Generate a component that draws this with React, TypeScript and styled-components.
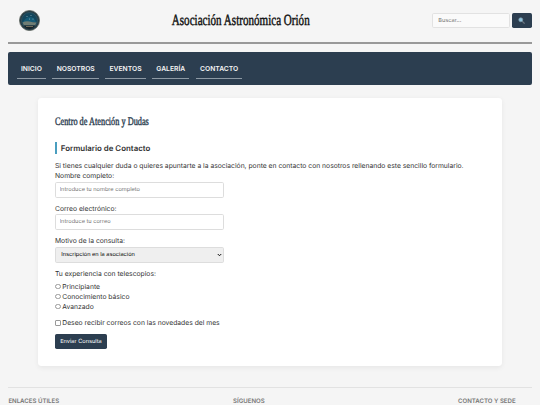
import React, { useState } from 'react';
import styled, { createGlobalStyle } from 'styled-components';

const GlobalStyle = createGlobalStyle`
  * {
    box-sizing: border-box;
  }

  html {
    overflow: hidden;
  }

  body {
    margin: 0;
    padding: 8.4px 8.4px 0;
    height: 405px;
    overflow: hidden;
    background-color: #f5f5f5;
    color: #333;
    font-family: Inter, 'Liberation Sans', sans-serif;
    font-size: 6.75px;
    line-height: 10.13px;
    text-rendering: geometricPrecision;
  }

  input,
  select,
  button {
    font-family: inherit;
    font-size: 5.63px;
    text-rendering: inherit;
  }
`;

const Header = styled.header`
  display: flex;
  justify-content: space-between;
  align-items: center;
  height: 35.6px;
  padding: 0 0 8.4px 11px;
  border-bottom: 2px solid #999;
`;

const Logo = styled.svg`
  display: block;
  width: 21px;
  height: 21px;
`;

const TitleBox = styled.div`
  display: flex;
  flex-shrink: 0;
  justify-content: center;
  width: 138px;
  margin-left: 10px;
`;

const Title = styled.h1`
  margin: 0;
  color: #111;
  font-family: 'Liberation Serif', serif;
  font-size: 15.4px;
  font-weight: 400;
  line-height: 20px;
  white-space: nowrap;
  -webkit-text-stroke: 0.45px #111;
  transform: scaleX(0.72);
`;

const SearchForm = styled.form`
  display: flex;
  gap: 1.7px;
`;

const SearchInput = styled.input`
  width: 78px;
  height: 15px;
  padding: 0 5.4px;
  border: 1px solid #e2e2e2;
  border-radius: 1.7px;
  background: #fafafa;

  &::placeholder {
    color: #757575;
  }
`;

const SearchButton = styled.button`
  display: flex;
  align-items: center;
  justify-content: center;
  width: 20px;
  height: 15px;
  padding: 0;
  border: 0;
  border-radius: 1.7px;
  background: #2c3e50;
`;

const Nav = styled.nav`
  display: flex;
  align-items: center;
  gap: 6.4px;
  height: 33.4px;
  margin-top: 7.8px;
  padding: 1.6px 8.4px 0;
  border-radius: 2px;
  background: #2c3e50;
`;

const NavLink = styled.a`
  padding: 4px 4.2px;
  border-bottom: 1px solid #8d99a4;
  color: #f5f5f5;
  font-weight: 600;
  text-decoration: none;
  text-transform: uppercase;
`;

const Card = styled.main`
  width: 464px;
  height: 268px;
  margin: 12.8px auto 0;
  padding: 17px;
  border-radius: 3.4px;
  background: #fff;
  box-shadow: 0 1.7px 5px rgba(0, 0, 0, 0.06);
`;

const SectionTitle = styled.h2`
  width: max-content;
  margin: 0 0 12px;
  color: #2c3e50;
  font-family: 'Liberation Serif', serif;
  font-size: 11.5px;
  font-weight: 400;
  line-height: 15.5px;
  -webkit-text-stroke: 0.4px #2c3e50;
  transform: scaleX(0.72);
  transform-origin: left;
`;

const FormTitle = styled.h3`
  margin: 0 0 6.8px;
  padding-left: 3.8px;
  border-left: 2px solid #4a9ebf;
  font-size: 7.9px;
  font-weight: 600;
  line-height: 12px;
`;

const Intro = styled.p`
  margin: 0;
`;

const Field = styled.div`
  width: 169px;
  margin-bottom: 6.2px;
`;

const Label = styled.label`
  display: block;
`;

const TextInput = styled.input`
  display: block;
  width: 100%;
  height: 16.2px;
  padding: 0 3.6px;
  border: 1px solid #ddd;
  border-radius: 1.7px;

  &::placeholder {
    color: #757575;
  }
`;

const Select = styled.select`
  display: block;
  width: 100%;
  height: 16.4px;
  padding: 0 0 0 5.2px;
  border: 1px solid #ddd;
  border-radius: 1.7px;
  background: #efefef;
  color: #000;
  appearance: none;
`;

const SelectBox = styled.div`
  position: relative;
`;

const Chevron = styled.svg`
  position: absolute;
  top: 6.5px;
  right: 1.6px;
  width: 5px;
  height: 4px;
`;

const Option = styled.label`
  display: flex;
  align-items: center;
  gap: 1.7px;
`;

const Mark = styled.input`
  appearance: none;
  width: 5.6px;
  height: 5.6px;
  margin: 0 0 1px;
  border: 1px solid #999;
  border-radius: ${({ type }) => (type === 'radio' ? '50%' : '1px')};
  background: #fff;
`;

const Options = styled.div`
  margin: 2.6px 0 6.2px;
`;

const Submit = styled.button`
  display: block;
  width: 52px;
  height: 15px;
  margin-top: 5.8px;
  padding: 0;
  border: 0;
  border-radius: 1.7px;
  background: #2c3e50;
  color: #fff;
`;

const Footer = styled.footer`
  display: flex;
  justify-content: space-between;
  margin-top: 21.2px;
  padding: 8.4px 16px 0 0;
  border-top: 1px solid #e2e2e2;
`;

const FooterTitle = styled.h4`
  margin: 0;
  color: #777;
  font-size: 6.08px;
  font-weight: 600;
  text-transform: uppercase;

  &:nth-child(2) {
    margin-right: 19.6px;
  }
`;

const links = ['Inicio', 'Nosotros', 'Eventos', 'Galería', 'Contacto'];
const levels = ['Principiante', 'Conocimiento básico', 'Avanzado'];
const footerTitles = ['Enlaces útiles', 'Síguenos', 'Contacto y sede'];

const App: React.FC = () => {
  const [reason, setReason] = useState('inscripcion');

  return (
    <>
      <GlobalStyle />
      <Header>
        <Logo viewBox="0 0 42 42">
          <circle cx="21" cy="21" r="20" fill="#233b45" stroke="#5c625b" strokeWidth="1.6" />
          <circle cx="21" cy="21" r="16" fill="#13465c" stroke="#44616a" />
          <path d="M8 24q5-9 13-10t13 10z" fill="#155b76" />
          <path d="M7 25q7-4 14-2t14 2l-3 6H10z" fill="#6f7d74" />
          <path d="M9 31h24q-5 7-12 7T9 31z" fill="#17242a" />
          <path d="M14 33h14" stroke="#6b6a5c" strokeWidth="2" />
          <g fill="#8fb5c0">
            <circle cx="16" cy="13" r="1" />
            <circle cx="24" cy="11" r="1" />
            <circle cx="21" cy="18" r="1" />
            <circle cx="28" cy="18" r="1" />
          </g>
        </Logo>
        <TitleBox>
          <Title>Asociación Astronómica Orión</Title>
        </TitleBox>
        <SearchForm>
          <SearchInput placeholder="Buscar..." />
          <SearchButton type="button" aria-label="Buscar">
            <svg width="7" height="7" viewBox="0 0 14 14">
              <path d="M8 8l4.5 4.5" stroke="#66727c" strokeWidth="2.4" strokeLinecap="round" />
              <circle cx="5.5" cy="5.5" r="4" fill="#8fc3dc" stroke="#7d98a8" strokeWidth="1.4" />
            </svg>
          </SearchButton>
        </SearchForm>
      </Header>

      <Nav>
        {links.map(link => (
          <NavLink key={link} href="#">{link}</NavLink>
        ))}
      </Nav>

      <Card>
        <SectionTitle>Centro de Atención y Dudas</SectionTitle>
        <FormTitle>Formulario de Contacto</FormTitle>
        <Intro>
          Si tienes cualquier duda o quieres apuntarte a la asociación, ponte en contacto con nosotros rellenando este sencillo formulario.
        </Intro>
        <form>
          <Field>
            <Label htmlFor="nombre">Nombre completo:</Label>
            <TextInput id="nombre" placeholder="Introduce tu nombre completo" />
          </Field>
          <Field>
            <Label htmlFor="correo">Correo electrónico:</Label>
            <TextInput id="correo" placeholder="Introduce tu correo" />
          </Field>
          <Field>
            <Label htmlFor="motivo">Motivo de la consulta:</Label>
            <SelectBox>
              <Select id="motivo" value={reason} onChange={e => setReason(e.target.value)}>
                <option value="inscripcion">Inscripción en la asociación</option>
              </Select>
              <Chevron viewBox="0 0 10 8">
                <path d="M1.5 2l3.5 3.5L8.500 2" fill="none" stroke="#111" strokeWidth="2" />
              </Chevron>
            </SelectBox>
          </Field>
          <Intro>Tu experiencia con telescopios:</Intro>
          <Options>
            {levels.map(level => (
              <Option key={level}>
                <Mark type="radio" name="nivel" />
                {level}
              </Option>
            ))}
          </Options>
          <Option>
            <Mark type="checkbox" />
            Deseo recibir correos con las novedades del mes
          </Option>
          <Submit type="button">Enviar Consulta</Submit>
        </form>
      </Card>

      <Footer>
        {footerTitles.map(title => (
          <FooterTitle key={title}>{title}</FooterTitle>
        ))}
      </Footer>
    </>
  );
};

export default App;
